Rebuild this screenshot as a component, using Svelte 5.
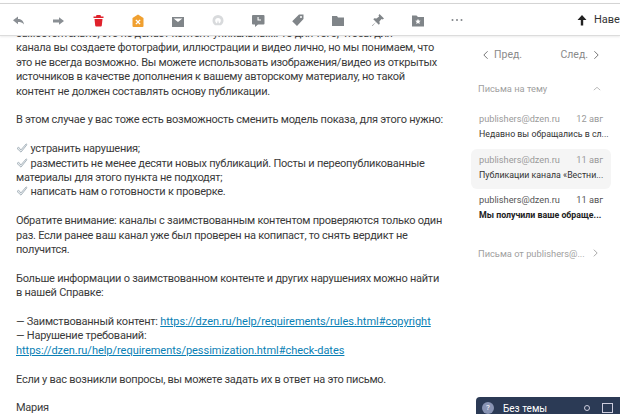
<script>
  const tools = [
    { name: 'reply', color: '#8a8f94', d: 'M3 8.200 8 4.500V7c3 0 5.500 1.500 6 5.500-1.500-2-3.500-2.500-6-2.500v2.200z' },
    { name: 'forward', color: '#8a8f94', d: 'M3 7.500h6V5.200l5 3.800-5 3.800v-2.300H3z' },
    { name: 'delete', color: '#e0222c', d: 'M6 4.500 6.500 3h4l.5 1.500h2.500V6h-10V4.500zM4.500 7h8l-.7 6.500a1 1 0 0 1-1 .9H6.200a1 1 0 0 1-1-.9z' },
    { name: 'spam', color: '#f0a030', d: 'M8 2.500l5.500 3.500v8a1 1 0 0 1-1 1h-9a1 1 0 0 1-1-1V6zM6.300 7.400 5.400 8.300 7.100 10l-1.700 1.700.9.900L8 10.900l1.700 1.700.9-.9L8.900 10l1.700-1.700-.9-.9L8 9.100z' },
    { name: 'read', color: '#808589', d: 'M2 5h12v10H2zM3.600 6.400 8 10l4.400-3.600z' },
    { name: 'receipt', color: '#d8dadc', d: 'M8 3a5.500 5.500 0 0 1 5.500 5.500c0 2-1 3.700-2.500 4.700H5c-1.500-1-2.500-2.700-2.500-4.700A5.500 5.500 0 0 1 8 3zM8 6a2.800 2.800 0 0 0-2.800 2.800c0 1.200.7 2.200 1.800 2.700L8 8l1 3.500c1.100-.5 1.800-1.500 1.800-2.700A2.800 2.800 0 0 0 8 6z' },
    { name: 'note', color: '#808589', d: 'M3 3h10.500a1 1 0 0 1 1 1v7.500a1 1 0 0 1-1 1H8L5 15v-2.500H3a1 1 0 0 1-1-1V4a1 1 0 0 1 1-1zM7.500 5v3.500H11V7.400H8.600V5z' },
    { name: 'label', color: '#808589', d: 'M9 2.500h4.500V7L7 14 2.200 9.200zM11 4a1 1 0 1 0 0 2 1 1 0 0 0 0-2z' },
    { name: 'folder', color: '#808589', d: 'M2 4h5l1 1.500h6V14H2z' },
    { name: 'pin', color: '#808589', d: 'M9.500 2 14 6.500l-1.400 1-1-.6-2.200 2.600.4 2.200-1 1L6 10l-3.500 4L2 13.500 6 10 3.300 7.200l1-1 2.200.4 2.600-2.200-.6-1z' },
    { name: 'newfolder', color: '#808589', d: 'M2 3.500h4.500L8 5h6v9.500H2zM8 6.800l.8 1.700 1.900.2-1.400 1.300.4 1.900L8 11l-1.700.9.4-1.900-1.400-1.300 1.900-.2z' }
  ];

  const threads = [
    { from: 'publishers@dzen.ru', date: '12 авг', subject: 'Недавно вы обращались в сл...' },
    { from: 'publishers@dzen.ru', date: '11 авг', subject: 'Публикации канала «Вестни...', active: true },
    { from: 'publishers@dzen.ru', date: '11 авг', subject: 'Мы получили ваше обраще...', unread: true }
  ];
</script>

{#snippet check()}
  <svg class="check" viewBox="0 0 14 12" aria-hidden="true"><path d="M1 6.500 3 5l2.600 3.400L12 1l1 1-7.200 9z" fill="#e9edf0" stroke="#8b9aa5" stroke-width=".8" /></svg>
{/snippet}

<div class="page">
  <header class="toolbar">
    <div class="tools">
      {#each tools as t}
        <svg class="tool" viewBox="0 0 16 16" aria-label={t.name}><path d={t.d} fill={t.color} fill-rule="evenodd" /></svg>
      {/each}
      <svg class="tool more" viewBox="0 0 16 16" aria-label="more">
        <circle cx="3.500" cy="8" r="1" /><circle cx="8" cy="8" r="1" /><circle cx="12.500" cy="8" r="1" />
      </svg>
    </div>
    <div class="up">
      <svg viewBox="0 0 12 12" aria-hidden="true"><path d="M6 1 10.500 6H7.200v5.500H4.800V6H1.500z" fill="#222" /></svg>
      <span>Наверх</span>
    </div>
  </header>

  <div class="content">
    <main class="letter">
      <p>самостоятельно, это не делает контент уникальным. То для того, чтобы для<br />
      канала вы создаете фотографии, иллюстрации и видео лично, но мы понимаем, что<br />
      это не всегда возможно. Вы можете использовать изображения/видео из открытых<br />
      источников в качестве дополнения к вашему авторскому материалу, но такой<br />
      контент не должен составлять основу публикации.</p>

      <p>В этом случае у вас тоже есть возможность сменить модель показа, для этого нужно:</p>

      <p>{@render check()} устранить нарушения;<br />
      {@render check()} разместить не менее десяти новых публикаций. Посты и переопубликованные<br />
      материалы для этого пункта не подходят;<br />
      {@render check()} написать нам о готовности к проверке.</p>

      <p>Обратите внимание: каналы с заимствованным контентом проверяются только один<br />
      раз. Если ранее ваш канал уже был проверен на копипаст, то снять вердикт не<br />
      получится.</p>

      <p>Больше информации о заимствованном контенте и других нарушениях можно найти<br />
      в нашей Справке:</p>

      <p>— Заимствованный контент: <a href="#copyright">https://dzen.ru/help/requirements/rules.html#copyright</a><br />
      — Нарушение требований:<br />
      <a href="#check-dates">https://dzen.ru/help/requirements/pessimization.html#check-dates</a></p>

      <p>Если у вас возникли вопросы, вы можете задать их в ответ на это письмо.</p>

      <p class="sign">Мария</p>
    </main>

    <aside class="side">
      <nav class="pager">
        <span class="pager-item"><svg class="chev" viewBox="0 0 8 12"><path d="M6.500 1.500 2 6l4.500 4.500" /></svg>Пред.</span>
        <span class="pager-item">След.<svg class="chev" viewBox="0 0 8 12"><path d="M1.500 1.500 6 6l-4.500 4.500" /></svg></span>
      </nav>

      <div class="section-head">
        <span>Письма на тему</span>
        <svg class="caret" viewBox="0 0 10 6"><path d="M1 5 5 1.500 9 5" /></svg>
      </div>

      <ul class="threads">
        {#each threads as m}
          <li class="thread" class:active={m.active} class:unread={m.unread}>
            <div class="meta"><span>{m.from}</span><span>{m.date}</span></div>
            <div class="subject">{m.subject}</div>
          </li>
        {/each}
      </ul>

      <div class="section-head from">
        <span>Письма от publishers@...</span>
        <svg class="chev small" viewBox="0 0 8 12"><path d="M2 2l4 4-4 4" /></svg>
      </div>
    </aside>
  </div>

  <div class="compose">
    <span class="count">?</span>
    <span class="compose-title">Без темы</span>
    <span class="dot"></span>
    <span class="square"></span>
  </div>
</div>

<style>
  :global(body) {
    margin: 0;
    background: #fff;
  }
  .page {
    position: relative;
    width: 620px;
    height: 414px;
    overflow: hidden;
    font-family: Roboto, 'Noto Sans', sans-serif;
    color: #333;
    background: #fff;
  }
  .toolbar {
    position: relative;
    z-index: 1;
    height: 31px;
    margin-top: 3px;
    border-top: 1px solid #d4d4d4;
    border-bottom: 1px solid #dcdcdc;
    background: #fff;
    display: flex;
    align-items: center;
    justify-content: space-between;
    box-shadow: 0 1px 2px rgba(0, 0, 0, 0.08);
  }
  .tools {
    display: flex;
    align-items: center;
    gap: 24px;
    padding-left: 10px;
  }
  .tool {
    width: 16px;
    height: 16px;
    flex: none;
  }
  .more {
    fill: #808589;
    margin-left: -1px;
  }
  .up {
    display: flex;
    align-items: center;
    gap: 6px;
    font-size: 11px;
    color: #333;
    white-space: nowrap;
    width: 44px;
    flex: none;
  }
  .up svg {
    width: 12px;
    height: 12px;
    flex: none;
  }
  .content {
    display: flex;
    align-items: flex-start;
  }
  .letter {
    width: 470px;
    flex: none;
    padding-left: 16px;
    box-sizing: border-box;
    margin-top: -9px;
    font-size: 11px;
    letter-spacing: -0.25px;
    line-height: 14.400px;
    white-space: nowrap;
    color: #3a3a3a;
  }
  .letter p {
    margin: 0 0 14.400px;
  }
  .letter .sign {
    margin: 0;
  }
  .letter a {
    color: #0a7fb5;
    text-decoration: underline;
    letter-spacing: -0.03px;
  }
  .check {
    width: 12px;
    height: 10px;
    vertical-align: -1px;
  }
  .side {
    width: 150px;
    flex: none;
    color: #9a9a9a;
  }
  .pager {
    display: flex;
    justify-content: space-between;
    padding: 12px 20px 0 12px;
    font-size: 10.500px;
    color: #8a8a8a;
  }
  .pager-item {
    display: flex;
    align-items: center;
    gap: 5px;
  }
  .chev {
    width: 7px;
    height: 10px;
    fill: none;
    stroke: #777;
    stroke-width: 1.200;
  }
  .chev.small {
    stroke: #aaa;
  }
  .section-head {
    display: flex;
    justify-content: space-between;
    align-items: center;
    margin: 22px 19px 0 8px;
    font-size: 9.300px;
    color: #a0a0a0;
  }
  .caret {
    width: 8px;
    height: 5px;
    fill: none;
    stroke: #aaa;
  }
  .threads {
    list-style: none;
    margin: 14px 0 0;
    padding: 0;
  }
  .thread {
    margin: 0 9px 0 1px;
    padding: 4px 8px 5px;
    border-radius: 6px;
    height: 31.500px;
  }
  .thread.active {
    background: #f5f5f5;
  }
  .meta {
    display: flex;
    justify-content: space-between;
    font-size: 9.200px;
    line-height: 14px;
    color: #9a9a9a;
  }
  .thread.unread .meta {
    color: #555;
  }
  .subject {
    font-size: 8.800px;
    line-height: 17px;
    color: #333;
    white-space: nowrap;
  }
  .thread.unread .subject {
    font-weight: 700;
    color: #222;
  }
  .section-head.from {
    margin-top: 18px;
    margin-right: 21px;
  }
  .compose {
    position: absolute;
    right: 0;
    bottom: 0;
    width: 144px;
    height: 17px;
    border-radius: 4px 0 0 0;
    background: #2b3a55;
    display: flex;
    align-items: center;
    padding: 5px 0 0 6px;
    box-sizing: border-box;
    color: #fff;
    font-size: 10px;
  }
  .count {
    width: 12px;
    height: 12px;
    border-radius: 50%;
    background: #8894b4;
    font-size: 8px;
    text-align: center;
    line-height: 12px;
    margin-right: 9px;
  }
  .compose-title {
    flex: 1;
  }
  .dot {
    width: 4px;
    height: 4px;
    border: 1px solid #ccd;
    border-radius: 50%;
    margin-right: 12px;
  }
  .square {
    width: 9px;
    height: 8px;
    border: 1px solid #ccd;
    margin-right: 7px;
  }
</style>
